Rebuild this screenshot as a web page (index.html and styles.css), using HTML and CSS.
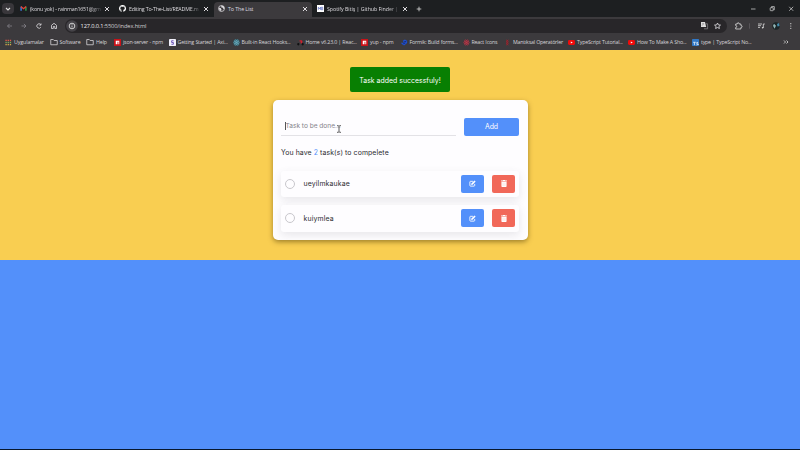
FILE: index.html
```
<!DOCTYPE html>
<html lang="en">
<head>
<meta charset="utf-8">
<title>To The List</title>
<link rel="stylesheet" href="styles.css">
</head>
<body>
<svg class="defs" aria-hidden="true">
  <symbol id="x" viewBox="0 0 8 8"><path d="M2 2l4 4M6 2L2 6" stroke="currentColor" fill="none"/></symbol>
  <symbol id="globe" viewBox="0 0 16 16"><circle cx="8" cy="8" r="6.8" fill="none" stroke="currentColor" stroke-width="1.8"/><path d="M2 6l4 1 2 3-1 4-4-3zM8 1l-1 4 4 1 1 3 3-1-2-5z" fill="currentColor"/></symbol>
  <symbol id="folder" viewBox="0 0 16 16"><path d="M1.5 3h5l1.7 2h6.3v8.5h-13z" fill="none" stroke="currentColor" stroke-width="1.6"/></symbol>
  <symbol id="npm" viewBox="0 0 16 16"><path d="M0 0h16v16H0z" fill="#c91218"/><path d="M4 4h8v8h-2V6H8v6H4z" fill="#fff"/></symbol>
  <symbol id="youtube" viewBox="0 0 16 16"><rect y="2.5" width="16" height="11" rx="3" fill="#f00b0b"/><path d="M6.4 5.5v5l4.4-2.5z" fill="#fff"/></symbol>
  <symbol id="atom" viewBox="0 0 16 16"><g fill="none" stroke="currentColor" stroke-width="1.3"><ellipse cx="8" cy="8" rx="7" ry="2.8"/><ellipse cx="8" cy="8" rx="7" ry="2.8" transform="rotate(60 8 8)"/><ellipse cx="8" cy="8" rx="7" ry="2.8" transform="rotate(120 8 8)"/></g><circle cx="8" cy="8" r="1.7" fill="currentColor"/></symbol>
  <symbol id="edit" viewBox="0 0 16 16"><path d="M9 3H3.5Q2 3 2 4.500v8Q2 14 3.500 14h8q1.500 0 1.500-1.500V9" fill="none" stroke="currentColor" stroke-width="2"/><path d="M5.500 8L12.500 1l2.700 2.700-7 7-3.200.5z" fill="currentColor"/></symbol>
  <symbol id="trash" viewBox="0 0 14 16"><path d="M0 1h4l1-1h4l1 1h4v2H0zM1 4h12v10.500q0 1.500-1.500 1.500h-9Q1 16 1 14.500z" fill="currentColor"/><path d="M4.300 6v8M7 6v8M9.700 6v8" stroke="#f9c4be" stroke-width=".8"/></symbol>
</svg>

<header class="browser">
  <div class="tabs">
    <span class="tab-search"><svg viewBox="0 0 8 8"><path d="M2 3l2 2 2-2" stroke="#ddd" stroke-width="1.1" fill="none"/></svg></span>
    <div class="tab">
      <svg class="fav" viewBox="0 0 16 16"><path d="M2.500 13V4" stroke="#4285f4" stroke-width="3"/><path d="M13.500 13V4" stroke="#34a853" stroke-width="3"/><path d="M2 3.500l6 5 6-5" stroke="#ea4335" stroke-width="3" fill="none"/></svg>
      <span class="title t-mail">(konu yok) - rainman1651@gm</span><svg class="close"><use href="#x"/></svg>
    </div>
    <div class="tab tab-git">
      <svg class="fav" viewBox="0 0 16 16"><path fill="#fff" d="M8 0C3.580 0 0 3.580 0 8c0 3.540 2.290 6.530 5.470 7.590.4.070.55-.17.55-.38v-1.490c-2.010.37-2.530-.49-2.690-.94-.09-.23-.48-.94-.82-1.130-.28-.15-.68-.52-.01-.53.630-.01 1.080.58 1.230.82.720 1.210 1.870.87 2.330.66.070-.52.280-.87.510-1.070-1.780-.2-3.640-.89-3.640-3.950 0-.87.310-1.590.82-2.150-.08-.2-.36-1.020.08-2.120 0 0 .67-.21 2.200.82a7.600 7.600 0 014 0c1.530-1.040 2.200-.82 2.200-.82.440 1.100.16 1.920.08 2.120.51.560.82 1.270.82 2.150 0 3.070-1.870 3.750-3.650 3.950.29.250.54.730.54 1.480v2.200c0 .21.150.46.550.38A8 8 0 008 0z"/></svg>
      <span class="title t-git">Editing To-The-List/README.m</span><svg class="close"><use href="#x"/></svg>
    </div>
    <div class="tab active">
      <svg class="fav"><use href="#globe"/></svg><span class="title">To The List</span><svg class="close"><use href="#x"/></svg>
    </div>
    <div class="tab tab-spot">
      <svg class="fav" viewBox="0 0 16 16"><path fill="#fff" d="M0 0h16v16H0z"/><path d="M3 11V5l2.500 4L8 5v6M10 5v6h3V5z" stroke="#5265bb" stroke-width="1.500" fill="none"/></svg>
      <span class="title t-spot">Spotify Bitiş | Github Finder | U</span><svg class="close"><use href="#x"/></svg>
    </div>
    <svg class="plus" viewBox="0 0 8 8"><path d="M4 1.700v4.600M1.700 4h4.600" stroke="#ddd" stroke-width=".8"/></svg>
    <svg class="window-controls" viewBox="0 0 44 10"><g stroke="#ddd" stroke-width=".7" fill="none"><path d="M0 5h4.500M38.200 2.800l4 4m0-4l-4 4"/><rect x="19.200" y="3.700" width="3" height="3" rx=".5"/><path d="M20.500 3.500v-.9h2.800v3.200h-.9"/></g></svg>
  </div>

  <div class="toolbar">
    <svg class="nav" viewBox="0 0 62 12"><g fill="none" stroke-width=".8"><path stroke="#85838a" d="M9 6H4.500M6.600 3.900L4.500 6l2.100 2.100M18.500 6H23M20.900 3.900L23 6l-2.100 2.100"/><path stroke="#dedce0" d="M37.800 4.700a2.200 2.200 0 10.100 2.400M38 3.400v1.700h-1.700M48.500 8.500V5.300L51 3.300l2.500 2v3.200h-1.700V6.500h-1.500v2z"/></g></svg>
    <div class="omnibox">
      <svg class="site" viewBox="0 0 12 12"><circle cx="6" cy="6" r="5.800" fill="#454348"/><circle cx="6" cy="6" r="2.800" fill="none" stroke="#ddd" stroke-width=".9"/><path d="M6 5.500v2M6 4.200v.7" stroke="#ddd" stroke-width=".8"/></svg>
      <span class="url"><b>127.0.0.1</b>:5500/index.html</span>
      <svg class="omni-icons" viewBox="0 0 22 10"><path d="M1 1h4l1.200 5H1z" fill="#ddd"/><path d="M4 7.800h3.600V2.800H6M2.100 2.800h2M3.200 2.200c0 1-.5 2-1.200 2.500" fill="none" stroke="#8c898e" stroke-width=".7"/><path d="M17.500 2l.9 1.900 2.100.2-1.600 1.400.5 2-1.900-1-1.900 1 .5-2-1.600-1.400 2.100-.2z" fill="none" stroke="#e5e3e7" stroke-width=".8"/></svg>
    </div>
    <svg class="actions" viewBox="0 0 62 12"><path d="M1.700 4h1.500q0-1.300 1-1.300t1 1.300h1.700v1.500q1.200 0 1.200 1t-1.200 1V9H1.700V7.500q1 0 1-1t-1-1z" fill="none" stroke="#ddd" stroke-width=".8"/><path d="M15.500 3.300v5.400" stroke="#69666c" stroke-width=".6"/><path d="M24 4h4M24 5.700h3M24 7.400h2M29.300 8V4h1.500" stroke="#ddd" stroke-width=".8" fill="none"/><circle cx="28.600" cy="7.700" r=".8" fill="#ddd"/><circle cx="42" cy="6" r="3.700" fill="#1b2526"/><path d="M40 3.700l2 2-1.500 3-1.500-3z" fill="#92b4b5"/><path d="M43 4l2-1 .5 3-2 .5z" fill="#438dae"/><g fill="#ddd"><circle cx="56.800" cy="3.700" r=".6"/><circle cx="56.800" cy="6" r=".6"/><circle cx="56.800" cy="8.300" r=".6"/></g></svg>
  </div>

  <nav class="bookmarks">
    <a class="bm"><svg viewBox="0 0 16 16"><path d="M1 3h3m2 0h3m2 0h3" stroke="#e6584b" stroke-width="3"/><path d="M1 8h3m2 0h3m2 0h3" stroke="#7caa5c" stroke-width="3"/><path d="M1 13h3m2 0h3m2 0h3" stroke="#d7a84b" stroke-width="3"/></svg><span>Uygulamalar</span></a>
    <a class="bm wide"><svg class="folder"><use href="#folder"/></svg><span>Software</span></a>
    <a class="bm wide"><svg class="folder"><use href="#folder"/></svg><span>Help</span></a>
    <a class="bm"><svg><use href="#npm"/></svg><span>json-server - npm</span></a>
    <a class="bm"><svg viewBox="0 0 16 16"><rect width="16" height="16" rx="2" fill="#f1f0fb"/><path d="M10.500 4H6v4h4v4H5.500" stroke="#6048b4" stroke-width="2" fill="none"/></svg><span>Getting Started | Axi...</span></a>
    <a class="bm"><svg class="teal" viewBox="0 0 16 16"><circle cx="8" cy="8" r="8" fill="#344f59"/><use href="#atom"/></svg><span>Built-in React Hooks...</span></a>
    <a class="bm"><svg viewBox="0 0 16 16"><circle cx="3" cy="12" r="2.600" fill="#111"/><circle cx="13" cy="12" r="2.600" fill="#111"/><path d="M6 5q5-2 5 1t-3 3" stroke="#d81f2c" stroke-width="3" fill="none"/></svg><span>Home v6.23.0 | Reac...</span></a>
    <a class="bm"><svg><use href="#npm"/></svg><span>yup - npm</span></a>
    <a class="bm"><svg viewBox="0 0 16 16"><path d="M4 4l5-3 5 3v5l-7 6-6-4V8l5 1z" fill="#1f50ce"/><path d="M6 7l6-2M5 11l5-2" stroke="#111d57" stroke-width="1.500"/></svg><span>Formik: Build forms...</span></a>
    <a class="bm"><svg class="red"><use href="#atom"/></svg><span>React Icons</span></a>
    <a class="bm"><svg viewBox="0 0 16 16"><path d="M5 2l5 4-5 4 5 4M10 2L5 6l5 4-5 4" stroke="#a1222d" stroke-width="2" fill="none"/></svg><span>Mantıksal Operatörler</span></a>
    <a class="bm"><svg><use href="#youtube"/></svg><span>TypeScript Tutorial...</span></a>
    <a class="bm"><svg><use href="#youtube"/></svg><span>How To Make A Sho...</span></a>
    <a class="bm"><svg viewBox="0 0 16 16"><rect width="16" height="16" rx="1.500" fill="#3178c6"/><path d="M2.500 7.500h6M5.500 7.500V14M14 8q-4-1-4 1t4 2.500-4 2" stroke="#fff" stroke-width="1.600" fill="none"/></svg><span>type | TypeScript No...</span></a>
    <svg class="more" viewBox="0 0 8 8"><path d="M2 2.500l1.500 1.500L2 5.500M4.500 2.500L6 4 4.500 5.500" stroke="#ddd" stroke-width=".8" fill="none"/></svg>
  </nav>
</header>

<main class="page">
  <div class="alert"><span>Task added successfuly!</span></div>
  <section class="card">
    <form class="entry">
      <div class="field"><i class="caret"></i><span class="placeholder">Task to be done...</span>
        <svg class="pointer" viewBox="0 0 6 8"><path d="M1 .7h1.200L3 1.300l.8-.6H5M3 1.300v5.400M1 7.300h1.200L3 6.700l.8.6H5" fill="none" stroke="#333" stroke-width=".8"/></svg>
      </div>
      <button class="add" type="button"><span>Add</span></button>
    </form>
    <p class="summary">You have <em>2</em> task(s) to compelete</p>
    <ul class="tasks">
      <li class="task"><i class="check"></i><span class="name">ueyilmkaukae</span><button class="btn edit" type="button"><svg><use href="#edit"/></svg></button><button class="btn delete" type="button"><svg><use href="#trash"/></svg></button></li>
      <li class="task"><i class="check"></i><span class="name">kuiymlea</span><button class="btn edit" type="button"><svg><use href="#edit"/></svg></button><button class="btn delete" type="button"><svg><use href="#trash"/></svg></button></li>
    </ul>
  </section>
</main>
</body>
</html>
```
FILE: styles.css
```
* { box-sizing: border-box; }
html, body { margin: 0; height: 450px; overflow: hidden; }
body {
  display: flex;
  flex-direction: column;
  background: #5390fa;
  border-bottom: 1px solid #07172d;
  font-family: "Open Sans", sans-serif;
}
svg { display: block; flex: none; }
.defs { position: absolute; width: 0; height: 0; }
button { border: 0; padding: 0; font: inherit; letter-spacing: inherit; }

.browser { flex: none; height: 50px; color: #dedce0; background: #3c3a3d; font-size: 5.3px; letter-spacing: -.11px; white-space: nowrap; }
.tabs { display: flex; align-items: center; height: 17px; background: #1d1f21; }
.tab-search { width: 12px; height: 11px; margin: 0 5px 0 2px; border-radius: 4px; background: #39373b; display: grid; place-items: center; }
.tab-search svg { width: 8px; height: 8px; }
.tab { display: flex; align-items: center; width: 98px; height: 15px; padding: 0 6px 0 1px; }
.tab-git { width: 97px; padding: 0 4px 0 2px; }
.active { width: 98px; margin-top: 2px; padding: 0 3px 2px 4px; border-radius: 4px 4px 0 0; background: #3c3a3d; }
.tab-spot { width: 101px; padding: 0 4px 0 5px; }
.fav { width: 7px; height: 7px; margin-right: 3px; }
.title { flex: 1; min-width: 0; letter-spacing: -.1px; }
.t-mail { letter-spacing: -.2px; word-spacing: .2px; }
.t-git { letter-spacing: -.2px; word-spacing: .2px; }
.t-spot { letter-spacing: -.05px; }
.t-mail, .t-git, .t-spot { -webkit-mask-image: linear-gradient(90deg, #000 84%, rgba(0, 0, 0, .2)); mask-image: linear-gradient(90deg, #000 84%, rgba(0, 0, 0, .2)); }
.close { width: 8px; height: 8px; margin-left: 2px; }
.plus { width: 8px; height: 8px; margin-left: 2px; }
.window-controls { width: 44px; height: 10px; margin: 0 5px 0 auto; }

.toolbar { display: flex; align-items: center; height: 18px; }
.nav { width: 62px; height: 12px; margin-left: 3px; }
.omnibox { display: flex; align-items: center; width: 662px; height: 14px; padding: 0 5px 0 1px; border-radius: 7px; background: #282629; }
.site { width: 12px; height: 12px; margin-right: 2.5px; }
.url { font-size: 5.7px; letter-spacing: -.12px; color: #d0ced2; }
.url b { font-weight: 400; color: #f0eef2; }
.omni-icons { width: 22px; height: 10px; margin-left: auto; }
.actions { width: 62px; height: 12px; margin-left: 7px; }

.bookmarks {
  display: grid;
  grid-template-columns: 44.5px 36.5px 28px 54.5px 64px 64px 64.5px 39.5px 62px 41.5px 64px 60px 64px 91px 8px;
  align-items: center;
  height: 15px;
  padding: 0 0 1px 5px;
}
.bm { display: flex; align-items: center; gap: 2px; color: #d5d3d7; letter-spacing: -.22px; word-spacing: .2px; }
.bm:first-child, .bm.wide { letter-spacing: -.12px; }
.bm svg { width: 7px; height: 7px; }
.bm .folder { width: 8px; height: 8px; }
.teal { color: #64aabc; }
.red { color: #bd3546; }
.more { width: 8px; height: 8px; margin-left: -1px; }

.page { flex: none; display: flex; flex-direction: column; align-items: center; height: 210px; padding-top: 17px; background: #f9ce51; font-family: Inter, sans-serif; font-size: 6.9px; color: #2b2b2f; }
.alert { width: 100px; height: 25px; display: grid; place-items: center; border-radius: 2px; background: #087f02; color: #fff; padding-top: 2px; white-space: nowrap; }
.alert span { letter-spacing: .03px; }
.card { width: 255px; height: 140px; margin-top: 8px; padding: 17.5px 8.5px 0; border-radius: 5px; background: #fefdff; box-shadow: 0 2px 5px rgba(76, 55, 5, .5); }
.entry { display: flex; justify-content: space-between; height: 18px; margin: 0; }
.field { position: relative; display: flex; align-items: center; width: 175px; padding: 0 0 0 4px; border-bottom: 1px solid #e3e2e6; }
.caret { width: 1px; height: 8px; background: #555; }
.placeholder { margin-left: -.5px; color: #85838a; font-size: 6.6px; letter-spacing: -.02px; }
.pointer { position: absolute; left: 55px; top: 7px; width: 6px; height: 8px; }
.add { width: 55px; border-radius: 2px; background: #5390fa; color: #fff; }
.summary { height: 10px; margin: 12.5px 0 0; line-height: 10px; letter-spacing: .1px; }
.summary em { color: #5390fa; font-style: normal; }
.tasks { display: grid; gap: 8px; margin: 12.500px 0 0; padding: 0; list-style: none; }
.task { display: flex; align-items: center; height: 26.5px; padding: 0 4px; border-radius: 3px; background: #fefdff; box-shadow: 0 3px 8px rgba(80, 80, 90, .13); }
.check { width: 10px; height: 10px; border: 1px solid #c8c7cc; border-radius: 50%; }
.name { margin: 0 auto 0 8.5px; letter-spacing: .15px; }
.btn { display: grid; place-items: center; width: 23px; height: 18px; border-radius: 2px; color: #fff; }
.btn svg { width: 7px; height: 7px; }
.edit { margin-right: 8px; background: #5390fa; }
.delete { background: #f16859; }
.delete svg { width: 6px; }
```
